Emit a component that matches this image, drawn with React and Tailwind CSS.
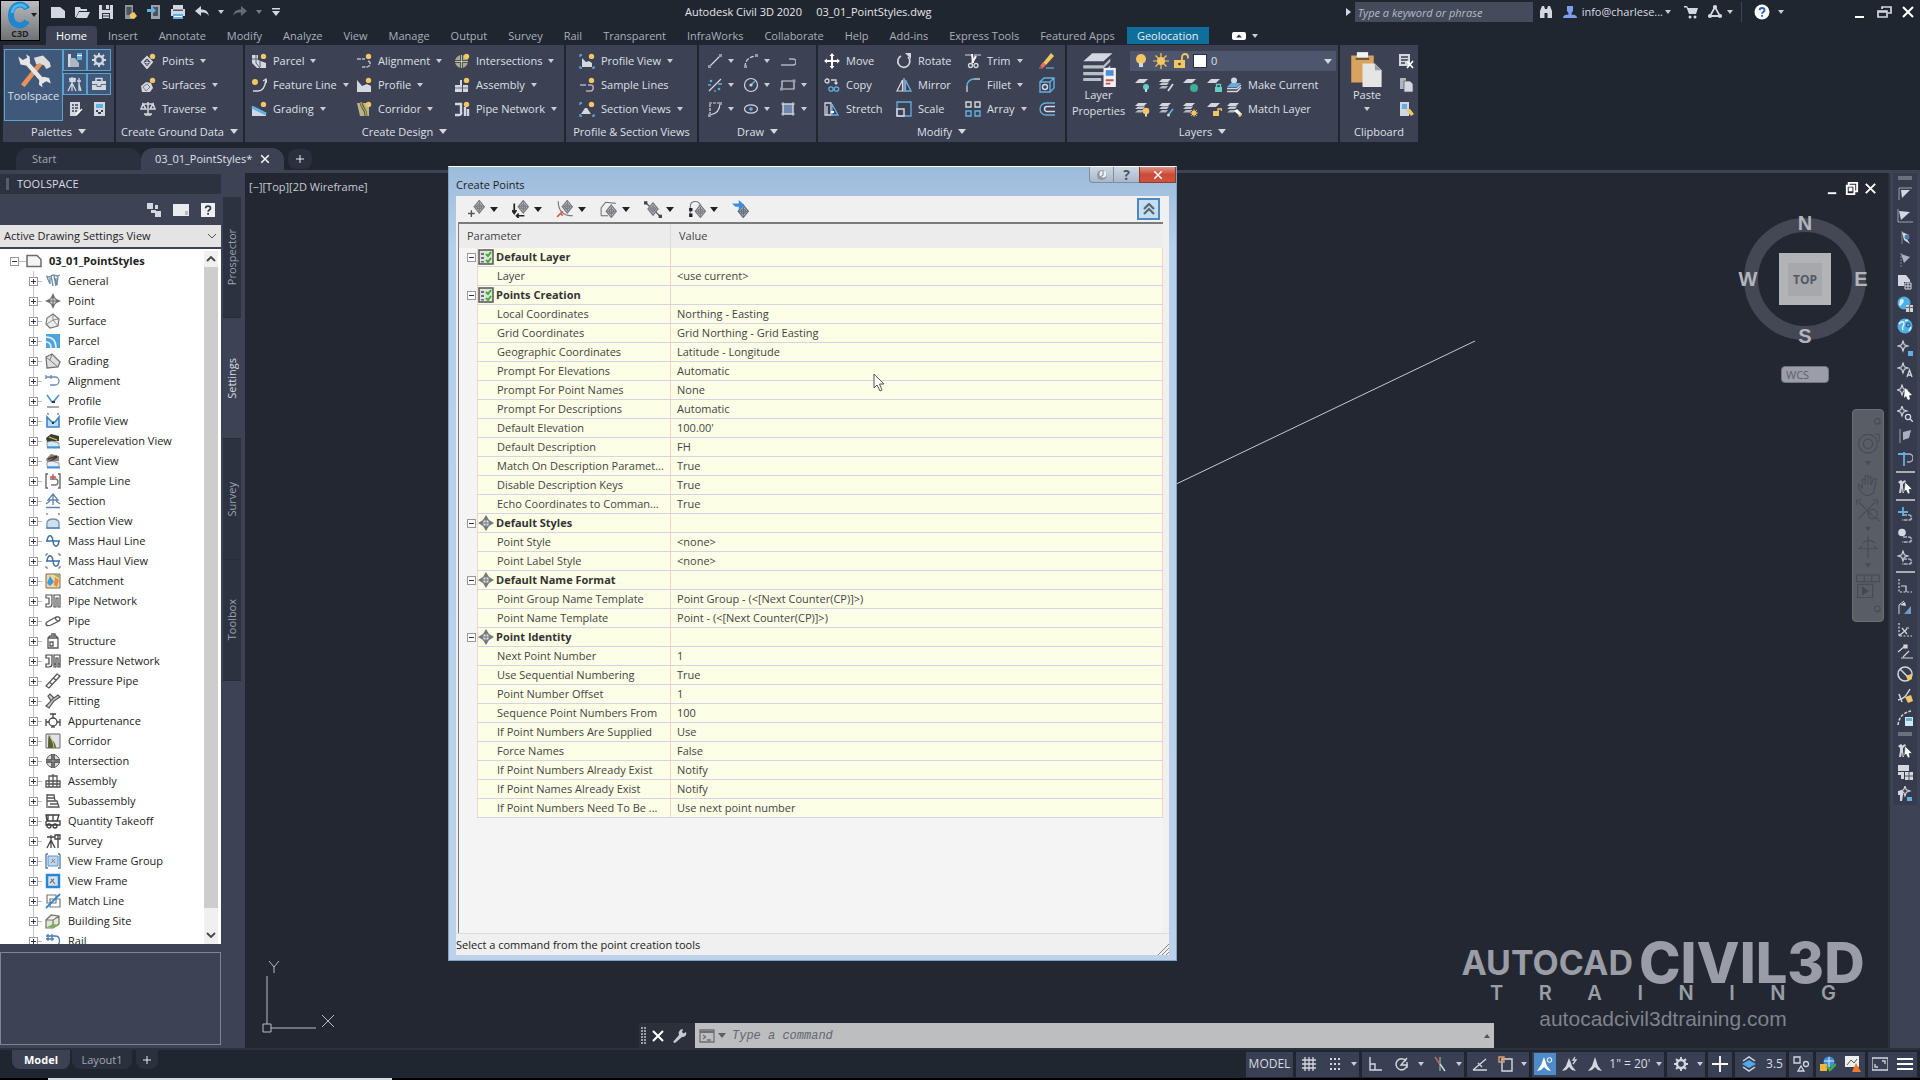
import React from "react";

const L = "#d3d7df";
const Y = "#f4c564";
const B = "#62b0e2";
const T = "#5fd0c0";
const D = "#3a3f4a";

const Sun = () => <circle cx="12.5" cy="3.4" r="2.7" fill={Y} />;
const Sheets = () => (
  <g fill={L}>
    <path d="M4 2h9l-3 3H1z" />
    <path d="M4 5.5h7L9 8H1z" opacity=".9" />
    <path d="M4 9h6l-2 2.5H1z" opacity=".8" />
  </g>
);
const Sheet = () => <path d="M5 2h9l-4 4H1z" fill={L} />;
const Target = ({ x = 8, y = 8, c = "#77797e", r = 4 }) => (
  <g fill="none" stroke={c} strokeWidth="1.1">
    <path d={`M${x} ${y - r - 1.5}l${r + 0.5} ${r + 1.5}-${r + 0.5} ${r + 1.5}-${r + 0.5}-${r + 1.5}z`} fill="#d2d4d7" />
    <circle cx={x} cy={y} r={r * 0.5} />
    <path d={`M${x} ${y - r}v${2 * r}M${x - r} ${y}h${2 * r}`} />
  </g>
);
const Star = ({ x = 6, y = 6 }) => (
  <path
    d={`M${x} ${y - 5}l1.3 3.7 3.7 1.3-3.7 1.3-1.3 3.7-1.3-3.7-3.7-1.3 3.7-1.3z`}
    fill="none"
    stroke={L}
    strokeWidth="1.1"
  />
);
const Curve = () => <path d="M6 9h6a2 2 0 0 1 0 5H5" fill="none" stroke="#a9b3c4" strokeWidth="1.6" strokeDasharray="4 1" />;
const Person = () => (
  <g fill={L}>
    <path d="M1 4l3-2 1.500 1.500L8 2l1 2-3 2v3l1 6H5.500L5 10l-1 5H2l1-6V6z" />
  </g>
);

const ICONS = {
  newFile: <path d="M1 3h9l5 4v7H1z" fill={L} />,
  open: (
    <g fill={L}>
      <path d="M1 3h5l1 2h6v2H5l-3 6H1z" />
      <path d="M5 8h11l-3 6H2z" />
    </g>
  ),
  save: (
    <g fill={L}>
      <path d="M1 1h14v14H1z" />
      <path d="M4 1h8v5H4zM4 9h8v6H4z" fill="#2b313d" />
      <path d="M8 1h3v4H8zM5 10h6v1.5H5zM5 12.500h6V14H5z" />
    </g>
  ),
  saveAs: (
    <g>
      <path d="M3 1h8v14H3z" fill="#8e949e" />
      <path d="M4.500 3h5v8h-5z" fill="#4d535f" />
      <path d="M8 10l4-2 3 4-3 3-4-1z" fill={Y} />
    </g>
  ),
  mobile: (
    <g>
      <path d="M5 1h9v14H5z" fill="#9aa1ac" />
      <path d="M7 3h5v9H7z" fill="#4d535f" />
      <path d="M1 5h5V2.500L10 6.500 6 10V8H1z" fill={B} />
    </g>
  ),
  print: (
    <g>
      <path d="M3 1h10v4H3zM1 5h14v7H1z" fill={L} />
      <path d="M3 5.500h10V7H3z" fill="#555b67" />
      <path d="M3 10h10v5H3z" fill={B} />
      <path d="M4 12h8v1H4z" fill="#fff" />
    </g>
  ),
  undo: <path d="M1 7l6-5v3.500c5 0 7 2 8 6.500-2-3-4-3.500-8-3.500V12z" fill={L} />,
  redo: <path d="M15 7L9 2v3.500C4 5.500 2 7.500 1 12c2-3 4-3.500 8-3.500V12z" fill="#646b79" />,
  custom: <path d="M4 4h8v1.500H4zM4 7h8l-4 5z" fill={L} />,
  binoculars: <path d="M2 14V7l2-5h2l1 3h2l1-3h2l2 5v7H9.500V9h-3v5z" fill={L} />,
  user: (
    <g fill="#7f9cf0">
      <path d="M5 2h6v5l-1.500 2v2H6.500V9L5 7z" />
      <path d="M1 14c0-3 3-3.500 7-3.500s7 .5 7 3.500z" />
    </g>
  ),
  cart: (
    <g fill={L}>
      <path d="M1 2h3l1 2h10l-2 6H6L3.500 3.500H1z" />
      <circle cx="7" cy="13" r="1.500" />
      <circle cx="12" cy="13" r="1.500" />
    </g>
  ),
  a360: (
    <g stroke={L} strokeWidth="1.800" fill={L}>
      <path d="M8 3L3 12h10z" fill="none" />
      <circle cx="8" cy="3" r="1.200" />
      <circle cx="3" cy="12" r="1.200" />
      <circle cx="13" cy="12" r="1.200" />
    </g>
  ),
  help: (
    <g>
      <circle cx="8" cy="8" r="7.500" fill="#fff" />
      <path d="M5.700 6.300c0-3 4.800-3 4.800 0 0 1.700-2.400 1.700-2.400 3.400M8.100 11v1.800" fill="none" stroke="#2e5fb8" strokeWidth="1.900" />
    </g>
  ),
  min: <path d="M3 12h9v2H3z" fill="#fff" />,
  restore: (
    <path d="M6 5V3h9v6h-3M2 7h9v6H2zM2 8h9" fill="none" stroke={L} strokeWidth="1.700" />
  ),
  close: <path d="M3 3l10 10M13 3L3 13" stroke="#fff" strokeWidth="2" />,
  ribbonToggle: (
    <g>
      <rect x="1" y="4" width="14" height="8" rx="2" fill="#fff" />
      <path d="M5 9.500l3-3 3 3z" fill="#333" />
    </g>
  ),
  toolspace: (
    <g>
      <path d="M11 5l-8 10" stroke="#e8935c" strokeWidth="2" />
      <path d="M8 2.500l4-1 3 3 .5 2-2 1-1-1.500-2-1-1.500.5z" fill="#dcdcdc" />
      <path d="M4.500 4.500l8 9" stroke="#e6e6e6" strokeWidth="2" />
      <path d="M1 2l2 1.500L5 2.500 4.500 1 6 2l.3 2.500L4.500 6 2 5.500z" fill="#e6e6e6" />
      <path d="M15.500 14l-2-1-2 1 .3 1.700-1.600-1.200.2-2.500 2-1 2.300.5z" fill="#e6e6e6" />
    </g>
  ),
  prospector: (
    <g>
      <path d="M1 2h3v8h6v5H1z" fill={L} />
      <path d="M3 6h5l4 5v4H3z" fill="#aeb6c2" />
      <path d="M10 1h5v7h-5z" fill={B} />
      <path d="M10 3h5v1h-5z" fill="#fff" />
    </g>
  ),
  gear: (
    <g>
      <circle cx="8" cy="8" r="4" fill="none" stroke={L} strokeWidth="2.400" />
      <path d="M8 1v3M8 12v3M1 8h3M12 8h3M3 3l2 2M11 11l2 2M13 3l-2 2M3 13l2-2" stroke={L} strokeWidth="1.900" />
    </g>
  ),
  survey: (
    <g fill="none" stroke={L} strokeWidth="1.300">
      <path d="M2 3h7M5 1v6M5 7L1 15M5 7v8M5 7l4 8M12 2v13M10 5h4M12 8l2 7" />
      <rect x="3" y="2.500" width="5" height="3" fill={L} />
    </g>
  ),
  toolbox: (
    <g>
      <path d="M5 5V2.500h6V5" fill="none" stroke={L} strokeWidth="1.500" />
      <path d="M1 5h14v9H1z" fill={L} />
      <path d="M1 8.500h5v2h4v-2h5" fill="none" stroke="#55708a" />
    </g>
  ),
  sheet: (
    <g>
      <path d="M3 1h10v10l-4 4H3z" fill={L} />
      <path d="M5 4h2M5 7h2M5 10h2M8 4h3M8 7h3M8 10h2" stroke={D} strokeWidth="1.300" />
      <path d="M9 14l6-6" stroke="#fff" strokeWidth="1.500" />
    </g>
  ),
  calc: (
    <g>
      <path d="M3 1h11v14H3z" fill={L} />
      <path d="M5 3h7v4H5z" fill={B} />
      <path d="M5 9h2v2H5zM10 9h2v2h-2zM7 11h3v2H7z" fill={D} />
    </g>
  ),
  points: (
    <g>
      <path d="M7 4l5 5-5 6-5-6z" fill="none" stroke={L} strokeWidth="2" />
      <path d="M7 7v5M4.500 9.500h5" stroke={L} />
      <Sun />
    </g>
  ),
  surfaces: (
    <g>
      <path d="M1 9l5-4 5 1 2 5-3 4H2z" fill={L} />
      <path d="M3 10l4-3 3 3-4 4z" fill="none" stroke="#777e8c" />
      <Sun />
    </g>
  ),
  traverse: (
    <g stroke={L} strokeWidth="1.500" fill="none">
      <path d="M2 3h12M8 1v12M5 14h6M3 3L1 8h5zM13 3l-3 5h5z" />
      <path d="M4 13h8" />
    </g>
  ),
  parcel: (
    <g>
      <path d="M1 2h6v5l8 3v5H6L1 10z" fill={L} />
      <path d="M1 6h6M5 2v8l4 5M9 8v6" stroke="#59606f" fill="none" />
      <Sun />
    </g>
  ),
  featureLine: (
    <g>
      <path d="M2 14h5c4 0 7-4 8-11" fill="none" stroke={L} strokeWidth="1.600" />
      <path d="M12 4l3-2 1 4" fill="none" stroke={L} strokeWidth="1.300" />
      <circle cx="4" cy="5" r="3" fill={Y} />
    </g>
  ),
  grading: (
    <g>
      <path d="M1 5l14 7v3H1z" fill={L} />
      <path d="M1 6l14 7" stroke={B} strokeWidth="3" />
      <Sun />
    </g>
  ),
  alignment: (
    <g>
      <path d="M1 6h8M12 8c3 1 3 5-1 6H6" fill="none" stroke="#b4bccb" strokeWidth="1.500" strokeDasharray="4 1" />
      <Sun />
    </g>
  ),
  profile: (
    <g>
      <path d="M1 3l5 6 5-2 4 2v6H1z" fill={L} />
      <Sun />
    </g>
  ),
  corridor: (
    <g>
      <path d="M1 2h12v13H4z" fill="#b9b48e" />
      <path d="M5 1c0 6 5 6 5 14" stroke="#5b5f3e" strokeWidth="3" fill="none" />
      <path d="M5 1c0 6 5 6 5 14" stroke={Y} strokeWidth=".800" fill="none" />
      <Sun />
    </g>
  ),
  intersections: (
    <g>
      <circle cx="7.500" cy="8.500" r="6.500" fill="#a9a98c" />
      <path d="M7.500 2v13M1 8.500h13" stroke="#4f5548" strokeWidth="3" />
      <path d="M7.500 2v13M1 8.500h13" stroke={L} strokeWidth=".800" />
      <Sun />
    </g>
  ),
  assembly: (
    <g>
      <path d="M1 8h5V3h2v12H1zM9 8h5v7H9z" fill={L} />
      <path d="M1 11h14" stroke="#6b7282" />
      <Sun />
    </g>
  ),
  pipes: (
    <g>
      <path d="M1 3h6v8a2 2 0 0 1-2 3H1M11 6v9M14 8v7" fill="none" stroke={L} strokeWidth="2.400" />
      <Sun />
    </g>
  ),
  profileView: (
    <g>
      <path d="M3 5l4 4 3-1 3 2v4H3z" fill={L} />
      <path d="M1 4V2h2M1 13v2h2M15 13v2h-2" fill="none" stroke={B} strokeWidth="1.300" />
      <Sun />
    </g>
  ),
  sampleLines: (
    <g>
      <path d="M1 8h6M9 8h3c3 0 3 5 0 6H7" fill="none" stroke="#b9a9bd" strokeWidth="1.500" />
      <Sun />
    </g>
  ),
  sectionViews: (
    <g>
      <path d="M2 13l4-6h2l4 6z" fill={L} />
      <path d="M1 4V2h2M1 13v2h2M15 13v2h-2" fill="none" stroke={B} strokeWidth="1.300" />
      <Sun />
    </g>
  ),
  line: (
    <g>
      <path d="M2 14L14 2" stroke={L} strokeWidth="1.200" />
      <path d="M1 12h3v3H1zM12 1h3v3h-3z" fill="#8f9bb0" />
    </g>
  ),
  arc: (
    <g>
      <path d="M2 14C2 7 7 3 14 3" fill="none" stroke={L} strokeDasharray="4 1.500" strokeWidth="1.200" />
      <path d="M1 12h3v3H1zM12 1h3v3h-3z" fill="#8f9bb0" />
    </g>
  ),
  pline: <path d="M1 12h12a3 3 0 0 0 0-6H9" fill="none" stroke="#a9b3c4" strokeWidth="1.400" />,
  divide: (
    <g>
      <path d="M2 14L14 2" stroke={L} strokeWidth="1.200" />
      <circle cx="4" cy="4" r="1.300" fill={B} />
      <circle cx="12" cy="12" r="1.300" fill={B} />
      <path d="M1 8h3M11 7h4M8 13v2" stroke={B} strokeWidth="1.300" />
    </g>
  ),
  circle: (
    <g fill="none" stroke={L} strokeWidth="1.200">
      <circle cx="8" cy="8" r="6.500" />
      <path d="M8 8l4-4" stroke={B} strokeWidth="1.500" />
      <circle cx="8" cy="8" r="1" fill={B} />
    </g>
  ),
  rect: (
    <g>
      <path d="M2 4h12v8H2z" fill="none" stroke={L} strokeWidth="1.200" />
      <path d="M0 10.500h3v3H0zM12.500 2.500h3v3h-3z" fill="#8f9bb0" />
    </g>
  ),
  pcurve: (
    <g fill="none" stroke={L} strokeWidth="1.200">
      <path d="M2 2h11M3 3v11" strokeDasharray="3 1" />
      <path d="M13 2c0 7-4 11-10 12" />
      <path d="M1 13h3v3H1zM12 1h3v3h-3z" fill="#8f9bb0" stroke="none" />
    </g>
  ),
  ellipse: (
    <g fill="none" stroke={L} strokeWidth="1.200">
      <ellipse cx="8" cy="8" rx="6.500" ry="4.200" />
      <circle cx="8" cy="8" r="1.200" fill={B} stroke={B} />
    </g>
  ),
  hatch: (
    <g>
      <path d="M3 3h10v10H3z" fill="#6d86ad" stroke={L} />
      <path d="M1 3h14M1 13h14M3 1v14M13 1v14" stroke={L} strokeWidth=".900" />
    </g>
  ),
  move: (
    <path d="M8 0l2.500 3H9v4h4V5.500L16 8l-3 2.500V9H9v4h1.500L8 16l-2.500-3H7V9H3v1.500L0 8l3-2.500V7h4V3H5.500z" fill="#fff" />
  ),
  copy: (
    <g fill="none" strokeWidth="1.300">
      <circle cx="3" cy="4" r="2" stroke={L} />
      <path d="M7 3h5v4M10.500 5.500L12 7l1.500-1.500" stroke={L} />
      <circle cx="7" cy="12" r="2.200" stroke={B} />
      <circle cx="12.500" cy="12" r="2.200" stroke={B} />
    </g>
  ),
  stretch: (
    <g fill="none" strokeWidth="1.300">
      <path d="M1 2h6v12H1zM3 5v9" stroke={L} />
      <path d="M8 3l6 11H8z" stroke={B} />
      <path d="M7 11h3" stroke="#fff" strokeWidth="2" />
    </g>
  ),
  rotate: (
    <g>
      <path d="M5 3a6 6 0 1 0 7 1" fill="none" stroke={L} strokeWidth="1.700" />
      <path d="M9 0h6v6z" fill={L} />
    </g>
  ),
  mirror: (
    <g>
      <path d="M6.500 3v11H1z" fill="none" stroke={L} strokeWidth="1.200" />
      <path d="M9.500 3v11H15z" fill="none" stroke={B} strokeWidth="1.400" />
      <path d="M8 1v14" stroke={L} />
    </g>
  ),
  scale: (
    <g fill="none">
      <path d="M1 1h14v14H1z" stroke={B} strokeWidth="1.300" />
      <path d="M1 8h7v7H1z" stroke={L} strokeWidth="1.500" />
    </g>
  ),
  trim: (
    <g>
      <path d="M0 2h6M9 2h7" stroke={L} strokeWidth="1.200" />
      <path d="M7 1l1 9M11 3L7 10" stroke="#fff" strokeWidth="2" />
      <circle cx="5.500" cy="12.500" r="2" fill="none" stroke={L} strokeWidth="1.300" />
      <circle cx="11" cy="12.500" r="2" fill="none" stroke={L} strokeWidth="1.300" />
    </g>
  ),
  fillet: (
    <g fill="none">
      <path d="M2 15V9" stroke={L} strokeWidth="1.300" />
      <path d="M2 9c0-4 3-7 7-7" stroke={B} strokeWidth="1.500" />
      <path d="M9 2h6" stroke={L} strokeWidth="1.300" />
    </g>
  ),
  array: (
    <g fill="none" strokeWidth="1.400">
      <path d="M1 1h5v5H1zM10 1h5v5h-5z" stroke={L} />
      <path d="M1 10h5v5H1zM10 10h5v5h-5z" stroke={B} />
    </g>
  ),
  erase: (
    <g>
      <path d="M4 10L12 0l3 3-8 9z" fill={Y} />
      <path d="M1 13l3-4 3 3-3 3z" fill="#e46f5b" />
      <path d="M7 15h8" stroke={B} strokeWidth="1.200" />
      <path d="M0 15h4" stroke="#e46f5b" />
    </g>
  ),
  box: (
    <g fill="none" stroke={B} strokeWidth="1.400">
      <path d="M1 5h10v10H1zM1 5l4-4h10v10l-4 4M11 5l4-4" />
      <circle cx="6" cy="10" r="2.500" stroke={L} />
    </g>
  ),
  offset: (
    <g fill="none">
      <path d="M16 2H7a6 6 0 0 0 0 12h9" stroke={B} strokeWidth="1.300" />
      <path d="M16 5.500H8a2.500 2.500 0 0 0 0 5h8" stroke={L} strokeWidth="1.500" />
    </g>
  ),
  layerProps: (
    <g>
      <path d="M5 1h9l-4 3.500H1z" fill={L} />
      <path d="M1 6.300h9l3-3v1.500l-3 3H1zM1 9.300h9l3-3v1.500l-3 3H1zM1 12h8v1.300H1z" fill="#b9bfc9" />
      <path d="M10 7.500h5.500v8.500H10z" fill="#f1f1f1" />
      <path d="M11 8.500h3.500V11H11z" fill="#4c8fd8" />
      <path d="M11 13h3.500M11 14.500h2" stroke="#c0504d" strokeWidth=".800" />
    </g>
  ),
  bulb: (
    <g>
      <circle cx="8" cy="6" r="5" fill={Y} />
      <path d="M6 10h4v4H6z" fill={L} />
    </g>
  ),
  sun: (
    <g>
      <circle cx="8" cy="8" r="4" fill={Y} />
      <path d="M8 0v16M0 8h16M2.500 2.500l11 11M13.500 2.500l-11 11" stroke={Y} strokeWidth="1.200" />
    </g>
  ),
  unlock: (
    <g>
      <path d="M1 7h11v8H1z" fill={Y} />
      <path d="M9 7V4a3 3 0 0 1 6 0v1.500" fill="none" stroke={Y} strokeWidth="1.800" />
      <circle cx="6.500" cy="11" r="1.300" fill={D} />
    </g>
  ),
  layOff: (
    <g><Sheet /><circle cx="12" cy="10" r="3" fill={T} /><path d="M11 12h2v3h-2z" fill={L} /></g>
  ),
  layIso: (
    <g><Sheets /><path d="M15 7l-5 7" stroke={L} strokeWidth="1.800" /></g>
  ),
  layFreeze: (
    <g><Sheet /><circle cx="12" cy="11" r="4" fill="#3fae94" /></g>
  ),
  layLock: (
    <g><Sheet /><path d="M9 10h7v5H9z" fill={T} /><path d="M10.500 10V7.500h4V10" fill="none" stroke={T} strokeWidth="1.300" /></g>
  ),
  layMake: (
    <g>
      <circle cx="8" cy="3.500" r="3" fill={L} />
      <path d="M1 10l4-4h10l-4 4z" fill={B} />
      <path d="M1 11.500h10l4-3.500M1 14.500h10l4-4" fill="none" stroke={L} strokeWidth="1.500" />
    </g>
  ),
  layOn: (
    <g><Sheets /><circle cx="12" cy="10" r="3.300" fill={Y} /><path d="M11 13h2v2.500h-2z" fill={L} /></g>
  ),
  layUniso: (
    <g><Sheets /><path d="M15 8l-4 5" stroke={B} strokeWidth="1.800" /><circle cx="10.500" cy="14" r="1.500" fill={L} /></g>
  ),
  layThaw: (
    <g><Sheets /><circle cx="12" cy="12" r="2.500" fill={Y} /><path d="M12 8v8M8 12h8M9 9l6 6M15 9l-6 6" stroke={Y} strokeWidth=".800" /></g>
  ),
  layUnlock: (
    <g><Sheet /><path d="M7 10h6v5H7z" fill={Y} /><path d="M12 10V8h3.500v2" fill="none" stroke={Y} strokeWidth="1.300" /></g>
  ),
  layMatch: (
    <g><Sheets /><path d="M8 10l3-2 5 5-2 2z" fill="#fff" /><path d="M12 15l3-3 1 2-2 2z" fill={Y} /></g>
  ),
  paste: (
    <g>
      <path d="M1 2h10v12H1z" fill="#d9a35f" />
      <path d="M3.500 .500h5v2.500h-5z" fill="#f1f1f1" />
      <path d="M3 3h6v1H3z" fill="#6d5a3d" />
      <path d="M6 5.500h5.500l3 3V16H6z" fill="#e5e5e5" />
      <path d="M11.500 5.500v3h3z" fill="#9da0a6" />
    </g>
  ),
  cut: (
    <g>
      <path d="M1 1h11v12H1z" fill={L} />
      <path d="M3 4h7M3 7h7M3 10h4" stroke={D} strokeWidth="1.300" />
      <path d="M9 8l6 7M15 8l-6 7" stroke="#fff" strokeWidth="1.700" />
    </g>
  ),
  copyclip: (
    <g>
      <path d="M2 1h6v11H2z" fill="#aeb4c0" />
      <path d="M6 4h6l3 3v8H6z" fill={L} stroke="#4a5060" strokeWidth=".700" />
    </g>
  ),
  copylink: (
    <g>
      <path d="M2 1h9v14H2z" fill={L} />
      <path d="M4 3h5v5H4z" fill={B} />
      <path d="M8 9l4-1 4 5-3 2z" fill={Y} />
    </g>
  ),
  tsTree: <path d="M1 1h6v6H1zM5 8h5v3H5zM9 9h6v6H9zM9 3h3v4H9z" fill={L} />,
  tsPanel: (
    <g><path d="M0 2h16v12H0z" fill="#e9ebee" /><path d="M12 9h3v4h-3z" fill="#b4b9c2" /></g>
  ),
  tsHelp: (
    <g>
      <path d="M1 1h14v14H1z" fill="#eef0f3" />
      <path d="M5.700 6.300c0-3 4.800-3 4.800 0 0 1.700-2.400 1.700-2.400 3.400M8.100 11v1.800" fill="none" stroke="#333a48" strokeWidth="1.800" />
    </g>
  ),
  drawing: <path d="M1 2.500h10l4 4v7H1z" fill="#f4f4f4" stroke="#6b6b6b" strokeWidth="1.500" />,

  General: (
    <g fill="none" stroke="#6f8ba8" strokeWidth="1.300">
      <path d="M1 3l3 1 4-2 4 1 3-1M2 4l3 7M6 3l2 10M9 3l2 10M13 3l-1 9M5 11V5M11 13V5" />
    </g>
  ),
  Point: (
    <g>
      <path d="M8 0l2.500 5.500L16 8l-5.500 2.500L8 16l-2.500-5.500L0 8l5.500-2.500z" fill="#6d6d6d" />
      <circle cx="8" cy="8" r="3.500" fill="#cfcfcf" stroke="#6d6d6d" />
      <path d="M8 4.500v7M4.500 8h7" stroke="#6d6d6d" />
    </g>
  ),
  Surface: (
    <g fill="#ededed" stroke="#777" strokeWidth="1.200">
      <path d="M8 1l6 5-1 7-8 2-4-4 1-6z" />
      <path d="M8 1v6l5 6M8 7l-6 4M8 7l6-1" fill="none" strokeWidth=".800" />
    </g>
  ),
  Parcel: (
    <g>
      <path d="M1 1h14v14H1z" fill="#4da3dc" />
      <path d="M1 4c7 0 10 4 10 11M1 9c4 0 5 3 5 6" fill="none" stroke="#e6f3fc" strokeWidth="1.600" />
    </g>
  ),
  Grading: (
    <g fill="#dedede" stroke="#757575" strokeWidth="1.300">
      <path d="M1 4l6-3 8 8-2 5-11 1z" /><path d="M1 4l12 10M7 1l-2 6" fill="none" strokeWidth=".900" />
    </g>
  ),
  Alignment: <path d="M1 4h9a4 4 0 0 1 0 8H5M1 2v4M6 2v4" fill="none" stroke="#6b8bb0" strokeWidth="1.300" />,
  Profile: (
    <g fill="none"><path d="M2 2l5 7 2-1 5-6" stroke="#4c93d0" strokeWidth="1.600" /><path d="M7 8h3v2H7z" fill="#234" /><path d="M2 14h12" stroke="#777" strokeWidth="1.300" /></g>
  ),
  "Profile View": (
    <g fill="none"><path d="M2 4v10h12V4l-4 5H7z" fill="#bcdcf5" stroke="#3d84c8" strokeWidth="1.600" /><path d="M7 9h2v2H7z" fill="#234" /><path d="M2 1h2M12 1h2" stroke="#555" /></g>
  ),
  "Superelevation View": (
    <g><path d="M1 5l5-4 8 2v5L2 9z" fill="#3c3c33" /><path d="M4 4l8 3" stroke="#d6c84f" strokeWidth="1.300" /><path d="M2 9l5-1 7 2v4H2z" fill="#d5e8f6" stroke="#777" strokeWidth=".700" /><path d="M2 14.500h13" stroke="#3d94dc" strokeWidth="2" /></g>
  ),
  "Cant View": (
    <g><path d="M1 6l5-5 8 2v5L2 9z" fill="#8b7a76" /><path d="M3 6l9-3M4 9l8-5" stroke="#2d2d2d" strokeWidth="1.200" /><path d="M2 9l5-1 7 2v4H2z" fill="#e5eff6" stroke="#777" strokeWidth=".700" /><path d="M2 14.500h13" stroke="#3d94dc" strokeWidth="2" /></g>
  ),
  "Sample Line": (
    <g fill="none" strokeWidth="1.400"><path d="M3 1H1v14h2M13 1h2v14h-2" stroke="#666" /><path d="M8 1v6M5 4h6" stroke="#d34b4b" /><path d="M5 6h5a3 3 0 0 1 0 6H6" stroke="#777" /></g>
  ),
  Section: <path d="M8 1v11M8 1L3 7h10zM1 11l4-3M15 11l-4-3M1 14.500h14" fill="none" stroke="#5d83aa" strokeWidth="1.300" />,
  "Section View": (
    <g><path d="M2 15V9c2-4 10-4 12 0v6z" fill="#cfe0ee" stroke="#7790a8" strokeWidth="1.300" /><path d="M1 1h2M13 1h2" stroke="#555" /><path d="M1 15h14" stroke="#3d84c8" /></g>
  ),
  "Mass Haul Line": <path d="M1 8h14M2 8c1-7 5-7 6 0s5 7 6 0" fill="none" stroke="#3b6fa6" strokeWidth="1.500" />,
  "Mass Haul View": (
    <g fill="none"><path d="M1 8h14M2 8c1-7 5-7 6 0s5 7 6 0" stroke="#3b6fa6" strokeWidth="1.500" /><path d="M1 3V1h2M13 1h2v2M1 13v2h2M13 15h2v-2" stroke="#666" /></g>
  ),
  Catchment: (
    <g><path d="M1 1h14v14H1z" fill="#f1d7a0" stroke="#7d6b52" /><path d="M5 3l4 6-4 4-3-3z" fill="#3f9be0" /><path d="M10 4l4 3-2 7-3-2z" fill="#e08a4b" /><path d="M9 2h5v3z" fill="#7fbf5f" /></g>
  ),
  "Pipe Network": (
    <g fill="none" stroke="#555" strokeWidth="1.200"><path d="M1 2h6v9a3 3 0 0 1-3 3H1v-3h3V5H1zM9 2h6v12h-2V5h-2v9H9z" /></g>
  ),
  Pipe: <path d="M2 9l9-5c4-1 5 2 3 4l-8 4c-5 2-6-1-4-3zM11 4c-1 2 0 4 3 4" fill="none" stroke="#555" strokeWidth="1.300" />,
  Structure: (
    <g fill="none" stroke="#555" strokeWidth="1.300"><path d="M3 5l2-2h6l2 2v10H3zM3 5h10M6 1h4v2M5 9h3v4H5z" /></g>
  ),
  "Pressure Network": (
    <g fill="none" stroke="#444" strokeWidth="1.200"><path d="M1 2h6v9a3 3 0 0 1-3 3H1v-3h3V5H1zM9 2h6v12h-2V5h-2v9H9zM9 11h2M13 11h2" /></g>
  ),
  "Pressure Pipe": <path d="M1 13L12 1l3 2L4 15zM4 9l3 2M8 5l3 2" fill="none" stroke="#555" strokeWidth="1.300" />,
  Fitting: <path d="M1 13l5-5-3-5 2-2 4 4 4-3 2 2-6 4-5 7zM9 4l-3 4" fill="#c9c9c9" stroke="#555" strokeWidth="1.200" />,
  Appurtenance: (
    <g fill="none" stroke="#444" strokeWidth="1.300"><path d="M5 1h6M8 1v4M1 6v7M15 6v7M1 9h3M12 9h3" /><circle cx="8" cy="9" r="4" /><path d="M6 14h4" /></g>
  ),
  Corridor: (
    <g><path d="M1 1h14v14H1z" fill="#dfe2ee" stroke="#666" /><path d="M4 1c1 6 7 7 7 14H3C3 9 3 5 4 1z" fill="#55613d" /><path d="M5 2c1 5 4 7 4 13" fill="none" stroke="#d9d14e" /></g>
  ),
  Intersection: (
    <g><circle cx="8" cy="8" r="6.500" fill="#ddd" stroke="#555" /><path d="M8 1v14M1 8h14" stroke="#454545" strokeWidth="3.500" /><path d="M8 1v14M1 8h14" stroke="#c9c9c9" strokeWidth=".700" /></g>
  ),
  Assembly: (
    <g fill="none" stroke="#555" strokeWidth="1.300"><path d="M8 1v13M4 3h8v5H4zM1 8h14v6H1zM4 8v6M12 8v6M1 11h14" /></g>
  ),
  Subassembly: <path d="M2 1v14M2 2h7l1 6H2M3 8h9l2 6H3M2 5h8M5 11h8" fill="none" stroke="#555" strokeWidth="1.300" />,
  "Quantity Takeoff": (
    <g fill="none" stroke="#3e3e3e" strokeWidth="1.300"><path d="M1 2h13l-2 6H2zM3 2v6M8 2v6M12 8h3v4H1V8" /><circle cx="4" cy="13" r="2" /><circle cx="10" cy="13" r="2" /></g>
  ),
  Survey: (
    <g fill="none" stroke="#444" strokeWidth="1.300"><path d="M2 4h8M6 2v5M6 7L2 15M6 7v8M6 7l4 8M13 1v14M10 2h5v4h-5z" /></g>
  ),
  "View Frame Group": (
    <g><path d="M3 3h10v10H3z" fill="#b9d7f0" stroke="#5d94c9" /><path d="M1 1h2M1 1v14h2M15 1h-2M15 1v14h-2" fill="none" stroke="#4b79a8" strokeWidth="1.300" /><path d="M6 10l4-4M7 6l3 4" stroke="#a9746c" /></g>
  ),
  "View Frame": (
    <g><path d="M2 2h12v12H2z" fill="#cfe2f2" stroke="#2a86d6" strokeWidth="2.500" /><path d="M5 10l4-4M6 6l4 5" stroke="#8d6a64" strokeWidth="1.200" /></g>
  ),
  "Match Line": (
    <g fill="none"><path d="M2 2h9v8H2zM5 6h10v8H5z" stroke="#777" strokeWidth="1.200" /><path d="M1 15L15 1" stroke="#2d86d3" strokeWidth="1.800" /></g>
  ),
  "Building Site": (
    <g fill="#e3e6da" stroke="#6f7569" strokeWidth="1.200"><path d="M1 7l5-5 8 1v8l-6 4H1zM1 7h7l6-4M8 7v8" /><path d="M2 14l6-3 6 1-5 3z" fill="#7fae5a" stroke="none" /></g>
  ),
  Rail: <path d="M1 3h9c6 0 6 9 0 10H5M1 6h8M3 1v7M7 1v7" fill="none" stroke="#4a7cae" strokeWidth="1.300" />,

  ptAdd: (<g><Target x={10} y={6} /><path d="M3 9v6M0 12h6" stroke="#555" strokeWidth="1.200" /></g>),
  ptDown: (<g><Target x={10} y={6} /><path d="M2 3v9M0 9l2 3 2-3M4 14h7M6 12l-2 2 2 2" stroke="#222" fill="none" strokeWidth="1.500" /></g>),
  ptArc: (<g><Target x={10} y={6} /><path d="M2 1c0 9 4 13 13 13" stroke="#777" fill="none" /><path d="M1 15l5-5M4 12l2 2" stroke="#d9534f" strokeWidth="1.400" /></g>),
  ptSurf: (<g><path d="M1 14V7l4-5 9 1" stroke="#777" fill="none" /><path d="M1 14h6" stroke="#777" /><Target x={10} y={10} /></g>),
  ptInterp: (<g><path d="M1 2l13 12" stroke="#555" /><path d="M0 1h3v3H0zM13 13h3v3h-3z" fill="#444" /><Target x={8} y={8} /></g>),
  ptSlope: (<g><path d="M2 13V6c0-6 8-6 9-1" stroke="#777" fill="none" /><path d="M1 7h3v3H1zM1 12h3v3H1z" fill="#222" /><Target x={11} y={10} /></g>),
  ptImport: (<g><Target x={10} y={10} c="#5f6b78" /><path d="M0 3h6V0l5 4.500L6 9V6H3z" fill="#3a8edb" /></g>),
  grpCheck: (
    <g>
      <path d="M1 1h14v14H1z" fill="#dfe3e0" stroke="#555" strokeWidth="1.500" />
      <path d="M3 4h3v2H3zM3 8h3v2H3zM3 12h3v1.500H3z" fill="#6b6f76" />
      <path d="M8 5l2 2 3-4M8 11l2 2 3-4" stroke="#3fae2b" strokeWidth="2" fill="none" />
    </g>
  ),
  grpPoint: (
    <g>
      <path d="M8 0l3 5 5 3-5 3-3 5-3-5-5-3 5-3z" fill="#74777c" />
      <circle cx="8" cy="8" r="3.500" fill="#e3e4dc" stroke="#74777c" />
      <path d="M8 4.500v7M4.500 8h7" stroke="#74777c" />
    </g>
  ),

  wrench: <path d="M2 14l6-7c-1-3 1-6 4-6l-1 3 1.500 1.500L15 4c1 3-1 5-4 5l-7 6z" fill="#c5cad3" />,
  prompt: (
    <g fill="none" stroke="#6b6f75" strokeWidth="1.300"><path d="M1 2h14v12H1z" /><path d="M1 4h14" strokeWidth="2" /><path d="M4 7l2.500 2L4 11M8 12h4" /></g>
  ),
  gridI: <path d="M4 1v14M8 1v14M12 1v14M1 4h14M1 8h14M1 12h14" stroke={L} strokeWidth="1.300" />,
  snapI: <path d="M3 3h10M3 8h10M3 13h10" stroke={L} strokeWidth="2" strokeDasharray="2 2" />,
  ortho: <path d="M3 1v13h12M3 8h5v6" fill="none" stroke={L} strokeWidth="1.400" />,
  polar: (<g fill="none" stroke={L} strokeWidth="1.400"><path d="M12 5a5.500 5.500 0 1 0 1 4H7l6-7" /><path d="M13 6v6" /></g>),
  iso: (<g strokeWidth="1.400"><path d="M8 1v14" stroke="#66b38b" /><path d="M3 1l6 9" stroke="#c66" /><path d="M8 8l5 7" stroke={L} /></g>),
  track: (<g fill="none" stroke={L} strokeWidth="1.300"><path d="M1 14h14M1 14L14 3" /><path d="M6 7l4 4" /></g>),
  osnap: (<g fill="none" strokeWidth="1.400"><path d="M4 3h10v12H4z" stroke={L} /><path d="M1 1h5v5H1z" stroke="#e39b68" /></g>),
  annoVis: (<g><path d="M7 1l2 6 1 3 4 5-4-1-3-3-3 3-4 1 4-6z" fill="#fff" /><circle cx="12.500" cy="4" r="2.300" fill="none" stroke="#fff" /></g>),
  annoAuto: (<g><path d="M7 2l2 5 1 3 4 5-4-1-3-3-3 3-4 1 4-5z" fill={L} /><path d="M13 1l-2 3h3l-3 4" fill="none" stroke={L} strokeWidth="1.300" /></g>),
  anno: <path d="M8 1l2 6 1 3 4 5-4-1-3-3-3 3-4 1 4-5 1-3z" fill={L} />,
  plus: <path d="M8 0v16M0 8h16" stroke="#fff" strokeWidth="1.800" />,
  layersS: (<g><path d="M8 4l7 4-7 4-7-4z" fill="#4fa9ea" /><path d="M2 5l6-4 6 4M2 11l6 4 6-4" fill="none" stroke={L} strokeWidth="1.500" /></g>),
  shapes: (<g fill="none" stroke={L} strokeWidth="1.300"><path d="M1 1h6v6H1zM8 10l3 5H5z" /><circle cx="13" cy="8" r="2.500" /></g>),
  globeCk: (<g><circle cx="9" cy="6" r="5.500" fill="#3f8ed8" /><path d="M0 8h7v7H0z" fill="#f0b53c" /><path d="M7 10l3 4 6-6" fill="none" stroke="#3fae4b" strokeWidth="2.400" /><path d="M4 5h10M9 1v10" stroke="#dcebf8" /></g>),
  imgWarn: (<g><path d="M0 0h14v11H0z" fill="#eee" /><path d="M2 9l4-5 3 3 3-4" stroke="#555" fill="none" /><path d="M11 7l5 9H7z" fill="#ee7b2e" /></g>),
  screen: (<g fill="none" stroke={L} strokeWidth="1.300"><path d="M0 2h16v12H0zM3 8v3h3M13 8V5h-3" /></g>),
  menu: <path d="M0 3h16M0 8h16M0 13h16" stroke="#fff" strokeWidth="2" />,

  rA: (<g><path d="M2 14V2h13" fill="none" stroke="#9aa2b0" /><path d="M4 4h9L5 12z" fill={L} /></g>),
  rB: (<g><path d="M1 1v13h15" fill="none" stroke="#9aa2b0" /><path d="M2 3l11 1-9 8z" fill={L} /></g>),
  rC: (<g><path d="M5 1v13" stroke="#7b8494" /><path d="M5 2l7 3-2 4 3 5-6-4z" fill={L} /><circle cx="10" cy="7" r="2.500" fill="#4f7ba8" /></g>),
  rD: (<g><path d="M4 1v14" stroke="#7b8494" strokeDasharray="2 1" /><path d="M4 2l9 3-6 6z" fill="#a9b1bf" /></g>),
  rE: (<g><path d="M1 1h8l4 5v6H1z" fill={L} /><path d="M7 8h8v8H7z" fill="#3d4357" /><path d="M8 9h6v6H8zM11 9v6M8 12h6" fill="none" stroke={L} /></g>),
  globeTab: (<g><circle cx="7" cy="7" r="6.500" fill="#4fb0e6" /><path d="M3 4c3-3 5 1 3 3S4 11 2 9z" fill="#d8f0fb" /><path d="M9 9h7v7H9z" fill="#d0d4da" /><path d="M9 11.500h7M12.500 9v7" stroke="#666" /></g>),
  globe: (<g><circle cx="8" cy="8" r="7.500" fill="#4fb0e6" /><path d="M2 6c3-4 5-2 5 0s-3 3-1 6M8 3l3-1M12 13l2-4" stroke="#dff3fc" strokeWidth="1.500" fill="none" /><circle cx="11" cy="7" r="2" fill="none" stroke="#2d4f6b" /></g>),
  stBlue: (<g><Star /><path d="M11 11h5v5h-5z" fill={B} /></g>),
  stA: (<g><Star /><path d="M10 15l2.500-7 2.500 7M11 13h3" fill="none" stroke={L} strokeWidth="1.300" /></g>),
  stCur: (<g><Star x={5} /><path d="M8 4l7 7-3 .500 1 3.500-2 1-2-4-2 2z" fill="#fff" /></g>),
  stZoom: (<g><Star x={5} y={5} /><circle cx="11" cy="11" r="2.600" fill="none" stroke={L} strokeWidth="1.300" /><path d="M13 13l3 3" stroke={L} strokeWidth="1.300" /></g>),
  flag: (<g><path d="M3 1v14" stroke="#9aa2b0" /><path d="M6 4l8-2-2 8-6 2z" fill="#a9b1bf" /></g>),
  bluT: (<g fill="none"><path d="M7 2v14M1 4h8" stroke={B} strokeWidth="1.800" /><path d="M9 4h3a4 4 0 0 1 0 8h-2" stroke="#a9b3c4" strokeWidth="1.500" /></g>),
  persCur: (<g><Person /><path d="M8 4l7 7-3 .500 1 3.500-2 1-2-4-2 2z" fill="#fff" stroke="#363c4e" strokeWidth=".600" /></g>),
  crvBlue: (<g><path d="M6 1v9M1 6h10" stroke={B} strokeWidth="1.800" /><Curve /></g>),
  crvBall: (<g><circle cx="5" cy="4.500" r="3.800" fill={L} /><Curve /></g>),
  crvStar: (<g><Star /><Curve /></g>),
  ang1: (<g fill="none" stroke={L} strokeWidth="1.200"><path d="M2 1v13h13" strokeDasharray="2 1.500" /><path d="M4 8h5v6" /></g>),
  ang2: (<g><path d="M2 14V5l5-4" fill="none" stroke={L} /><path d="M7 14l7-8v8z" fill="#6b9cc4" /><path d="M3 5l5-3 1 4z" fill={L} /></g>),
  ang3: (<g fill="none" stroke={L} strokeWidth="1.200"><path d="M2 1v13h13" strokeDasharray="2 1.500" /><path d="M2 14l8-7M5 6l5 6M9 6h3" /></g>),
  ang4: (<g fill="none" stroke={L} strokeWidth="1.200"><path d="M1 8l7-6M4 14h12M6 13l6-6" /><path d="M7 1h3v3H7z" fill={L} /></g>),
  noCirc: (<g fill="none" stroke={L} strokeWidth="1.500"><circle cx="8" cy="8" r="7" /><path d="M3 3l10 10" /><path d="M9 10l5-2 1 5-4 2z" fill={Y} stroke="none" /></g>),
  lineNote: (<g><path d="M1 12c6-1 8-4 12-11M2 6l3 8" stroke={L} fill="none" strokeWidth="1.500" /><path d="M8 9l6-2 2 6-5 2z" fill={Y} /></g>),
  arcCalc: (<g><path d="M1 15C2 7 6 3 14 1" stroke={L} fill="none" strokeWidth="1.500" strokeDasharray="3 1.500" /><path d="M8 7h8v9H8z" fill="#cfe9f7" /><path d="M9 8h6v3H9z" fill={B} /></g>),
  persTab: (<g><path d="M1 1h11v6H1z" fill={L} /><path d="M1 8h6v7H4V11H1zM8 8h8v8H8z" fill={L} /><path d="M8 12h8M12 8v8" stroke="#555" /></g>),
  persBlue: (<g><Star x={8} y={5} /><path d="M1 5h5v4l-1 6H3V9H1z" fill={L} /><path d="M10 11h5v4h-5z" fill={B} /></g>),
};

const Icon = ({ name, className = "size-4" }) => (
  <svg viewBox="0 0 16 16" className={`${className} shrink-0`} aria-hidden="true">
    {ICONS[name]}
  </svg>
);

const Caret = ({ className = "border-[#c9cdd6]" }) => (
  <span className={`block size-0 shrink-0 border-x-[3px] border-b-0 border-t-[4px] border-x-transparent! ${className}`} />
);
const BigCaret = ({ className = "border-[#d5d8df]" }) => (
  <span className={`block size-0 shrink-0 border-x-4 border-b-0 border-t-[5px] border-x-transparent! ${className}`} />
);

const TABS = [
  "Insert", "Annotate", "Modify", "Analyze", "View", "Manage", "Output", "Survey", "Rail", "Transparent",
  "InfraWorks", "Collaborate", "Help", "Add-ins", "Express Tools", "Featured Apps",
];

const Tool = ({ icon, label, caret }) => (
  <button className="flex h-6 items-center whitespace-nowrap">
    <Icon name={icon} />
    <span className="ml-[6px]">{label}</span>
    {caret && <span className="ml-[6px]"><Caret /></span>}
  </button>
);

const Column = ({ className, items }) => (
  <div className={`flex flex-col items-start ${className}`}>
    {items.map(([icon, label, caret]) => (
      <Tool key={label} icon={icon} label={label} caret={caret} />
    ))}
  </div>
);

const Panel = ({ className, title, caret, children }) => (
  <section className={`mr-[2px] flex shrink-0 flex-col bg-[#3c4154] ${className}`}>
    <div className="flex h-[76px] pt-1">{children}</div>
    <div className="flex h-[21px] items-center justify-center gap-[6px] whitespace-nowrap">
      <span>{title}</span>
      {caret && <BigCaret />}
    </div>
  </section>
);

const IconButton = ({ icon, label, className = "h-6 w-6" }) => (
  <button aria-label={label || icon} className={`flex shrink-0 items-center justify-center ${className}`}>
    <Icon name={icon} />
  </button>
);

function Header() {
  return (
    <header className="flex h-[45px] shrink-0">
      <button aria-label="Application menu" className="flex h-[41px] w-10 shrink-0 flex-col items-center border border-black bg-linear-to-b from-[#b9bcc1] to-[#6f7378]">
        <span className="flex items-center">
          <svg viewBox="0 0 24 28" className="ml-1 h-7 w-6" aria-hidden="true">
            <path d="M20 8C17 1 4 2 4 14s12 13 16 6" fill="none" stroke="#1f86d0" strokeWidth="6" />
            <path d="M19 7C16 2 6 3 5 12" fill="none" stroke="#4db8ee" strokeWidth="3" />
          </svg>
          <Caret className="border-[#222]" />
        </span>
        <span className="text-[9px] font-bold leading-[10px] text-[#222]">C3D</span>
      </button>
      <div className="flex min-w-0 flex-1 flex-col">
        <div className="flex h-6 items-center justify-between">
          <div className="flex w-[645px] items-center pl-[6px]">
            {["newFile", "open", "save", "saveAs", "mobile", "print", "undo"].map((n) => (
              <IconButton key={n} icon={n} />
            ))}
            <span className="mr-1 ml-1"><Caret /></span>
            <IconButton icon="redo" />
            <span className="mr-[6px] ml-1"><Caret className="border-[#777e8b]" /></span>
            <IconButton icon="custom" className="h-6 w-4" />
          </div>
          <h1 className="flex-1 whitespace-pre text-[#e4e6ea]">{"Autodesk Civil 3D 2020     03_01_PointStyles.dwg"}</h1>
          <div className="flex shrink-0 items-center">
            <span className="block size-0 border-y-4 border-l-[5px] border-y-transparent border-l-[#d5d8df]" />
            <input
              aria-label="Search"
              placeholder="Type a keyword or phrase"
              className="ml-1 h-5 w-[178px] bg-[#444c5c] px-[3px] italic text-white outline-none placeholder:text-[#b4bac4]"
            />
            <IconButton icon="binoculars" label="Find" className="ml-[1px] h-6 w-6" />
            <IconButton icon="user" label="Account" />
            <button className="flex items-center gap-[2px] text-[#d9dce2]">info@charlese... <Caret /></button>
            <IconButton icon="cart" label="Cart" className="ml-2 h-6 w-6" />
            <IconButton icon="a360" label="Autodesk App" />
            <Caret />
            <span className="mx-2 h-5 w-px bg-[#3f4757]" />
            <IconButton icon="help" label="Help" />
            <span className="ml-1"><Caret /></span>
            <IconButton icon="min" label="Minimize" className="ml-16 h-6 w-6" />
            <IconButton icon="restore" label="Restore" />
            <IconButton icon="close" label="Close" />
          </div>
        </div>
        <nav className="flex h-[21px] items-end pl-[6px] text-[#a9afbb]">
          <button className="h-[19px] w-[51px] rounded-t-sm bg-[#3c4154] text-white">Home</button>
          <div className="flex h-[19px] items-center gap-[21px] pl-[11px]">
            {TABS.map((t) => (
              <button key={t} className="whitespace-nowrap">{t}</button>
            ))}
          </div>
          <button className="mb-[1px] ml-3 h-[17px] w-[82px] bg-[#0e6f9d] text-[#e9eef2]">Geolocation</button>
          <button aria-label="Ribbon display" className="ml-[22px] flex h-[19px] items-center gap-[5px]">
            <Icon name="ribbonToggle" />
            <Caret />
          </button>
        </nav>
      </div>
    </header>
  );
}

const DRAW = [
  ["line", 1], ["arc", 1], ["pline", 0],
  ["divide", 1], ["circle", 1], ["rect", 1],
  ["pcurve", 1], ["ellipse", 1], ["hatch", 1],
];

function Ribbon() {
  return (
    <div className="flex h-[97px] shrink-0 pl-[3px] text-[#dde0e6]">
      <Panel className="w-[111px]" title="Palettes" caret>
        <button className="ml-[1px] flex h-[72px] w-[59px] flex-col items-center border border-[#5aa4d2] bg-[#40597a] pt-[2px]">
          <Icon name="toolspace" className="size-9" />
          <span>Toolspace</span>
        </button>
        <div className="grid h-[72px] grid-cols-2">
          {["prospector", "gear", "survey", "toolbox"].map((n) => (
            <IconButton key={n} icon={n} className="mb-[2px] h-[22px] w-6 border border-[#5aa4d2] bg-[#40597a]" />
          ))}
          {["sheet", "calc"].map((n) => <IconButton key={n} icon={n} />)}
        </div>
      </Panel>
      <Panel className="w-[127px]" title="Create Ground Data" caret>
        <Column className="pl-6" items={[["points", "Points", 1], ["surfaces", "Surfaces", 1], ["traverse", "Traverse", 1]]} />
      </Panel>
      <Panel className="w-[319px]" title="Create Design" caret>
        <Column className="w-[111px] pl-[6px]" items={[["parcel", "Parcel", 1], ["featureLine", "Feature Line", 1], ["grading", "Grading", 1]]} />
        <Column className="w-[98px]" items={[["alignment", "Alignment", 1], ["profile", "Profile", 1], ["corridor", "Corridor", 1]]} />
        <Column className="" items={[["intersections", "Intersections", 1], ["assembly", "Assembly", 1], ["pipes", "Pipe Network", 1]]} />
      </Panel>
      <Panel className="w-[131px]" title="Profile & Section Views">
        <Column className="pl-[13px]" items={[["profileView", "Profile View", 1], ["sampleLines", "Sample Lines"], ["sectionViews", "Section Views", 1]]} />
      </Panel>
      <Panel className="w-[117px]" title="Draw" caret>
        <div className="grid h-[72px] grid-cols-3 pl-2">
          {DRAW.map(([n, c]) => (
            <button key={n} aria-label={n} className="flex h-6 w-[37px] items-center gap-[5px]">
              <Icon name={n} />
              {c ? <Caret /> : null}
            </button>
          ))}
        </div>
      </Panel>
      <Panel className="w-[247px]" title="Modify" caret>
        <Column className="w-[72px] pl-[6px]" items={[["move", "Move"], ["copy", "Copy"], ["stretch", "Stretch"]]} />
        <Column className="ml-[6px] w-[69px]" items={[["rotate", "Rotate"], ["mirror", "Mirror"], ["scale", "Scale"]]} />
        <Column className="w-[70px]" items={[["trim", "Trim", 1], ["fillet", "Fillet", 1], ["array", "Array", 1]]} />
        <div className="flex flex-col">
          {["erase", "box", "offset"].map((n) => <IconButton key={n} icon={n} />)}
        </div>
      </Panel>
      <Panel className="w-[271px]" title="Layers" caret>
        <button className="flex w-[63px] flex-col items-center pt-[2px]">
          <Icon name="layerProps" className="size-9" />
          <span>Layer</span>
          <span>Properties</span>
        </button>
        <div className="flex flex-col">
          <div className="mt-[2px] flex h-5 w-[206px] items-center gap-1 bg-[#4d566c] pl-[3px] pr-1">
            <Icon name="bulb" />
            <Icon name="sun" />
            <Icon name="unlock" />
            <span className="size-[14px] border border-[#2b303c] bg-white" />
            <select aria-label="Layer" className="h-5 flex-1 appearance-none bg-transparent outline-none">
              <option>0</option>
            </select>
            <BigCaret />
          </div>
          <div className="mt-[2px] flex h-6 items-center">
            {["layOff", "layIso", "layFreeze", "layLock"].map((n) => <IconButton key={n} icon={n} />)}
            <Tool icon="layMake" label="Make Current" />
          </div>
          <div className="flex h-6 items-center">
            {["layOn", "layUniso", "layThaw", "layUnlock"].map((n) => <IconButton key={n} icon={n} />)}
            <Tool icon="layMatch" label="Match Layer" />
          </div>
        </div>
      </Panel>
      <Panel className="w-[78px]" title="Clipboard">
        <button className="flex w-[54px] flex-col items-center pt-[2px]">
          <Icon name="paste" className="size-9" />
          <span>Paste</span>
          <span className="mt-1"><Caret /></span>
        </button>
        <div className="flex flex-col">
          {["cut", "copyclip", "copylink"].map((n) => <IconButton key={n} icon={n} />)}
        </div>
      </Panel>
    </div>
  );
}

function FileTabs() {
  return (
    <div className="flex h-[31px] shrink-0 items-end border-b-[3px] border-[#3d4350] pl-4">
      <button className="h-[22px] w-[125px] rounded-t-xl bg-[#2b303e] pl-4 text-left text-[#a3a8b3]">Start</button>
      <div className="flex h-[22px] w-[143px] items-center rounded-t-xl bg-[#3c4154] pl-[14px] text-[#dfe2e8]">
        <button className="w-[100px] text-left">03_01_PointStyles*</button>
        <button aria-label="Close tab" className="ml-1"><Icon name="close" className="size-3" /></button>
      </div>
      <button aria-label="New tab" className="ml-1 mb-[1px] flex h-5 w-6 items-center justify-center rounded-lg bg-[#2b303e]">
        <Icon name="plus" className="size-2" />
      </button>
    </div>
  );
}

const TREE = [
  "General", "Point", "Surface", "Parcel", "Grading", "Alignment", "Profile", "Profile View", "Superelevation View",
  "Cant View", "Sample Line", "Section", "Section View", "Mass Haul Line", "Mass Haul View", "Catchment",
  "Pipe Network", "Pipe", "Structure", "Pressure Network", "Pressure Pipe", "Fitting", "Appurtenance", "Corridor",
  "Intersection", "Assembly", "Subassembly", "Quantity Takeoff", "Survey", "View Frame Group", "View Frame",
  "Match Line", "Building Site", "Rail",
];

const Expander = ({ open, label }) => (
  <button aria-label={label} className="flex size-[9px] shrink-0 items-center justify-center border border-[#999] bg-white">
    <svg viewBox="0 0 5 5" className="size-[5px]" aria-hidden="true">
      <path d={open ? "M0 2.500h5" : "M0 2.500h5M2.500 0v5"} stroke="#334" strokeWidth="1" />
    </svg>
  </button>
);

function Toolspace() {
  return (
    <aside className="flex w-[245px] shrink-0 bg-[#3d4355]">
      <div className="flex w-[221px] flex-col pt-[1px]">
        <div className="flex h-5 shrink-0 items-center gap-2 bg-[#2d3240] pl-[6px] text-[#d9dce2]">
          <span className="h-3 w-[3px] bg-[#555c6b]" />
          <h2>TOOLSPACE</h2>
        </div>
        <div className="flex h-[31px] shrink-0 items-center justify-end gap-[11px] pr-[5px]">
          <button aria-label="Panorama"><Icon name="tsTree" /></button>
          <button aria-label="Preview"><Icon name="tsPanel" /></button>
          <button aria-label="Toolspace help"><Icon name="tsHelp" /></button>
        </div>
        <div className="flex h-[22px] shrink-0 items-center bg-[#e4e4e4] pr-1 text-[#222]">
          <select aria-label="View" className="h-[22px] flex-1 appearance-none bg-transparent pl-1 outline-none">
            <option>Active Drawing Settings View</option>
          </select>
          <svg viewBox="0 0 10 6" className="h-[6px] w-[10px]" aria-hidden="true"><path d="M1 1l4 4 4-4" fill="none" stroke="#555" /></svg>
        </div>
        <div className="mt-[2px] flex min-h-0 flex-1 overflow-hidden bg-white pt-[2px] pr-[3px] text-[#222]">
          <ul className="min-w-0 flex-1 overflow-hidden">
            <li>
              <div className="flex h-5 items-center pl-[10px]">
                <Expander open label="Collapse 03_01_PointStyles" />
                <span className="h-px w-[7px] bg-[#bbb]" />
                <Icon name="drawing" />
                <span className="ml-[7px] font-bold">03_01_PointStyles</span>
              </div>
              <ul className="ml-[33px] border-l border-[#c4c4c4]">
                {TREE.map((t) => (
                  <li key={t} className="-ml-[5px] flex h-5 items-center">
                    <Expander label={`Expand ${t}`} />
                    <span className="h-px w-1 bg-[#bbb]" />
                    <span className="ml-[3px] flex"><Icon name={t} /></span>
                    <span className="ml-[7px] whitespace-nowrap">{t}</span>
                  </li>
                ))}
              </ul>
            </li>
          </ul>
          <div className="flex w-[14px] flex-col">
            <button aria-label="Scroll up" className="flex h-4 items-center justify-center bg-[#f0f0f0]">
              <svg viewBox="0 0 10 6" className="h-[6px] w-[10px]" aria-hidden="true"><path d="M1 5l4-4 4 4" fill="none" stroke="#444" strokeWidth="1.800" /></svg>
            </button>
            <div className="flex-1 bg-[#cdcdcd]" />
            <button aria-label="Scroll down" className="flex h-9 items-end justify-center bg-[#f0f0f0] pb-[6px]">
              <svg viewBox="0 0 10 6" className="h-[6px] w-[10px]" aria-hidden="true"><path d="M1 1l4 4 4-4" fill="none" stroke="#444" strokeWidth="1.800" /></svg>
            </button>
          </div>
        </div>
        <div className="mt-2 mb-[3px] h-[93px] shrink-0 border border-[#7d8596]" />
      </div>
      <div className="flex flex-col pt-[24px] pl-[2px]">
        {["Prospector", "Settings", "Survey", "Toolbox"].map((t) => (
          <button
            key={t}
            className={`flex h-[121px] w-[18px] items-center justify-center border-b border-[#272c38] ${t === "Settings" ? "bg-[#3d4355] text-[#d9dce2]" : "bg-[#2d3240] text-[#9ba1ae]"}`}
          >
            <span className="rotate-180 [writing-mode:vertical-rl]">{t}</span>
          </button>
        ))}
      </div>
    </aside>
  );
}

const GROUPS = [
  ["Default Layer", "grpCheck", [["Layer", "<use current>"]]],
  ["Points Creation", "grpCheck", [
    ["Local Coordinates", "Northing - Easting"],
    ["Grid Coordinates", "Grid Northing - Grid Easting"],
    ["Geographic Coordinates", "Latitude - Longitude"],
    ["Prompt For Elevations", "Automatic"],
    ["Prompt For Point Names", "None"],
    ["Prompt For Descriptions", "Automatic"],
    ["Default Elevation", "100.00'"],
    ["Default Description", "FH"],
    ["Match On Description Paramet...", "True"],
    ["Disable Description Keys", "True"],
    ["Echo Coordinates to Comman...", "True"],
  ]],
  ["Default Styles", "grpPoint", [["Point Style", "<none>"], ["Point Label Style", "<none>"]]],
  ["Default Name Format", "grpPoint", [
    ["Point Group Name Template", "Point Group - (<[Next Counter(CP)]>)"],
    ["Point Name Template", "Point - (<[Next Counter(CP)]>)"],
  ]],
  ["Point Identity", "grpPoint", [
    ["Next Point Number", "1"],
    ["Use Sequential Numbering", "True"],
    ["Point Number Offset", "1"],
    ["Sequence Point Numbers From", "100"],
    ["If Point Numbers Are Supplied", "Use"],
    ["Force Names", "False"],
    ["If Point Numbers Already Exist", "Notify"],
    ["If Point Names Already Exist", "Notify"],
    ["If Point Numbers Need To Be ...", "Use next point number"],
  ]],
];

const CELL = "h-[19px] whitespace-nowrap border-b border-b-[#d9d2e4] border-l border-l-[#f3d3cb] bg-[#fdfee6] p-0";

function CreatePoints() {
  return (
    <section
      aria-label="Create Points"
      className="absolute -top-[7px] left-[203px] z-10 flex h-[795px] w-[729px] flex-col border border-[#7fa3c7] border-t-white bg-linear-to-b from-[#9dbbdb] via-[#b6cfea] via-10% to-[#bcd2ea] px-[7px] pb-[5px] text-[#444]"
    >
      <div className="flex h-[29px] shrink-0 items-start justify-between">
        <h2 className="pt-[10px] text-[#222]">Create Points</h2>
        <div className="-mr-[7px] flex h-4">
          <button aria-label="Pin" className="flex w-[25px] items-center justify-center rounded-bl border border-t-0 border-[#7c8ea3] bg-linear-to-b from-[#cdd8e4] to-[#a9b8ca]">
            <svg viewBox="0 0 14 12" className="h-3 w-[14px]" aria-hidden="true">
              <circle cx="7" cy="6" r="5" fill="#8d97a5" /><circle cx="8" cy="5" r="3.500" fill="#eef1f4" /><path d="M8 1v5L3 10" fill="none" stroke="#8d97a5" strokeWidth="1.200" />
            </svg>
          </button>
          <button aria-label="Dialog help" className="w-[25px] border-b border-[#7c8ea3] bg-linear-to-b from-[#cdd8e4] to-[#a9b8ca] text-sm font-bold leading-[15px] text-[#4c5561]">?</button>
          <button aria-label="Close dialog" className="flex w-[37px] items-center justify-center border border-t-0 border-[#8f3b32] bg-linear-to-b from-[#dc9184] via-[#c94a38] to-[#d0533f]">
            <Icon name="close" className="size-3" />
          </button>
        </div>
      </div>
      <div className="flex min-h-0 flex-1 flex-col bg-[#f0f0f0]">
        <div className="flex h-[26px] shrink-0 items-center justify-between pr-[9px] pl-3">
          <div className="flex items-center">
            {["ptAdd", "ptDown", "ptArc", "ptSurf", "ptInterp", "ptSlope"].map((n) => (
              <button key={n} aria-label={n} className="flex w-11 items-center gap-1">
                <Icon name={n} className="size-[18px]" />
                <BigCaret className="border-[#222]" />
              </button>
            ))}
            <button aria-label="Import points"><Icon name="ptImport" className="size-[18px]" /></button>
          </div>
          <button aria-label="Collapse" className="flex h-[22px] w-[23px] items-center justify-center border-2 border-[#4d89bd] bg-[#c5def2]">
            <svg viewBox="0 0 12 12" className="size-3" aria-hidden="true"><path d="M1 6l5-5 5 5M1 11l5-5 5 5" fill="none" stroke="#5c6671" strokeWidth="2.200" /></svg>
          </button>
        </div>
        <div className="mr-[6px] ml-[2px] flex-1 border-t-2 border-l border-[#7b7b7b] bg-[#f4f4f4]">
          <table className="w-full table-fixed border-separate border-spacing-0">
            <colgroup><col className="w-[18px]" /><col className="w-[193px]" /><col /></colgroup>
            <thead>
              <tr className="h-[24px] bg-[#ececec] text-left">
                <th colSpan={2} className="p-0 pl-2 font-normal">Parameter</th>
                <th className="border-l border-[#ddd] p-0 pl-2 font-normal">Value</th>
              </tr>
            </thead>
            {GROUPS.map(([title, icon, rows]) => (
              <tbody key={title}>
                <tr>
                  <td className="h-[19px] p-0 pl-2"><Expander open label={`Collapse ${title}`} /></td>
                  <td className={`${CELL} text-[#333]`}>
                    <span className="flex h-[18px] items-center font-bold"><span className="mr-[2px]"><Icon name={icon} /></span>{title}</span>
                  </td>
                  <td className={`${CELL} border-r border-r-[#f3d3cb]`} />
                </tr>
                {rows.map(([k, v]) => (
                  <tr key={k}>
                    <td className="p-0" />
                    <td className={CELL}><span className="block pl-[19px] leading-[18px]">{k}</span></td>
                    <td className={`${CELL} border-r border-r-[#f3d3cb]`}><span className="block pl-[6px] leading-[18px]">{v}</span></td>
                  </tr>
                ))}
              </tbody>
            ))}
          </table>
        </div>
        <div className="flex h-[22px] shrink-0 items-center justify-between border-t border-[#dcdcdc] text-[#222]">
          <span>Select a command from the point creation tools</span>
          <svg viewBox="0 0 12 12" className="mt-2 size-3" aria-hidden="true"><path d="M1 12L12 1M5 12l7-7M9 12l3-3" stroke="#8a8a8a" /></svg>
        </div>
      </div>
    </section>
  );
}

function ViewCube() {
  return (
    <div className="absolute top-[39px] right-[15px] flex w-[136px] flex-col items-center">
      <svg viewBox="0 0 136 134" className="h-[134px] w-[136px]" aria-label="View cube" fontFamily="'Liberation Sans',sans-serif" fontWeight="700" fontSize="20" fill="#b2b5bb" textAnchor="middle">
        <circle cx="68" cy="67" r="54" fill="none" stroke="#434854" strokeWidth="14" />
        <path d="M42 41h52v52H42z" fill="#b1b3b6" />
        <path d="M51 51h34v33H51z" fill="#a6a8ab" />
        <text x="68" y="72" fontSize="12" fontFamily="'Open Sans',sans-serif" fill="#54585f">TOP</text>
        <text x="68" y="18">N</text>
        <text x="68" y="131">S</text>
        <text x="11" y="74">W</text>
        <text x="124" y="74">E</text>
      </svg>
      <button className="mt-[20px] h-[17px] w-12 rounded-sm border border-[#70757f] bg-[#9b9ea6] pl-1 text-left leading-[14px] text-[#5b606b]">WCS</button>
    </div>
  );
}

function NavBar() {
  return (
    <div className="absolute top-[236px] right-1 h-[213px] w-8 rounded-sm border border-[#6a6e75] bg-[#595d64]">
      <svg viewBox="0 0 32 213" className="size-full" fill="none" stroke="#484c53" strokeWidth="1.200" aria-label="Navigation bar">
        <circle cx="26" cy="6" r="3" />
        <circle cx="16" cy="30" r="10" /><circle cx="16" cy="30" r="5" /><path d="M24 20h4v8" />
        <path d="M10 83c-4-6-6-8-4-10l4 4v-9h3v6-10h3v10-9h3v9l3-7 3 1-3 14c-4 4-8 4-12 1z" />
        <path d="M6 92l18 18M24 92L6 110M4 90h5M4 90v5M21 90h5v5" /><circle cx="21" cy="105" r="5" /><path d="M25 109l4 4" />
        <path d="M16 128v24M6 142h20M10 136c4-4 10-4 14 0M6 142l4-3M26 142l-4-3" />
        <path d="M4 170h24v7H4zM12 170v7M20 170v7M5 180h16v14H5z" /><path d="M10 183l6 4-6 4z" fill="#42464e" />
        <path d="M14 49h4l-2 3zM14 119h4l-2 3zM14 158h4l-2 3z" fill="#42464e" />
        <circle cx="26" cy="206" r="3" />
      </svg>
    </div>
  );
}

function Canvas() {
  return (
    <main className="relative min-w-0 flex-1 bg-[#222732]">
      <p className="absolute top-[6px] left-1 text-[#c9cdd4]">[−][Top][2D Wireframe]</p>
      <svg className="absolute top-[160px] left-[925px] h-[160px] w-[310px]" viewBox="0 0 310 160" aria-hidden="true">
        <path d="M0 154L305 8" stroke="#c7cad0" strokeWidth="1" />
      </svg>
      <svg className="absolute bottom-0 left-4 h-[88px] w-[80px]" viewBox="0 0 80 88" fill="none" stroke="#b9bdc5" aria-label="UCS icon">
        <path d="M6 64V16M10 68h45M2 64h8v8H2z" />
        <path d="M8 1l5 6 5-6M13 7v6M61 55l12 12M73 55L61 67" />
      </svg>
      <div className="absolute top-2 right-[10px] flex items-center gap-1">
        <button aria-label="Minimize drawing"><Icon name="min" className="size-[15px]" /></button>
        <button aria-label="Restore drawing">
          <svg viewBox="0 0 16 16" className="size-[15px]" aria-hidden="true"><path d="M5 5V2h9v9h-3M3 5h8v9H3zM6 8h2v2H6z" fill="none" stroke="#fff" strokeWidth="2" /></svg>
        </button>
        <button aria-label="Close drawing"><Icon name="close" className="size-[15px]" /></button>
      </div>
      <ViewCube />
      <NavBar />
      <CreatePoints />
      <svg className="absolute top-[200px] left-[628px] z-20 h-[20px] w-[14px]" viewBox="0 0 14 20" aria-hidden="true">
        <path d="M1 1v14l3-3 3 6 2-1-2.500-6H11z" fill="#fff" stroke="#555" />
      </svg>
      <div className="absolute right-[20px] bottom-[15px] flex w-[410px] flex-col items-center text-[#9a9da6]">
        <div className="flex items-center gap-[6px] font-[Inter,sans-serif] font-bold">
          <span className="text-[34px] leading-9">AUTOCAD</span>
          <span className="text-[56px] leading-9 font-extrabold">CIVIL3D</span>
        </div>
        <div className="flex w-[346px] justify-between font-[Inter,sans-serif] text-xl leading-6 font-semibold">
          {"TRAINING".split("").map((c, i) => <span key={i}>{c}</span>)}
        </div>
        <a href="#training" className="font-['Liberation_Sans',sans-serif] text-[21px] leading-7 text-[#7f838d]">autocadcivil3dtraining.com</a>
      </div>
      <div className="absolute bottom-0 left-[394px] z-10 flex h-[25px] w-[855px] bg-[#2b303b]">
        <div className="flex w-14 items-center gap-[2px] pl-[2px]">
          <svg viewBox="0 0 6 18" className="h-[18px] w-[6px]" aria-hidden="true"><path d="M1 0v18M4 0v18" stroke="#9a9fa9" strokeWidth="2" strokeDasharray="2 1" /></svg>
          <IconButton icon="close" label="Close command line" className="h-5 w-[18px] p-[3px]" />
          <IconButton icon="wrench" label="Customize" className="h-5 w-5" />
        </div>
        <label className="flex flex-1 items-center bg-[#bcbec0] px-1">
          <Icon name="prompt" />
          <span className="ml-[3px]"><BigCaret className="border-[#5b5f66]" /></span>
          <input placeholder="Type a command" aria-label="Command" className="ml-[6px] h-6 flex-1 bg-transparent font-['Liberation_Mono',monospace] text-xs italic outline-none placeholder:text-[#63676e]" />
          <span className="block size-0 border-x-[3px] border-b-4 border-x-transparent border-b-[#555]" />
        </label>
      </div>
    </main>
  );
}

const SIDE = [
  "grip", "rA", "rB", "rC", "rD", "rE", "globeTab", "globe", "stBlue", "stA", "stCur", "stZoom", "flag", "bluT",
  "bar", "persCur", "bar", "crvBlue", "crvBall", "crvStar", "bar", "ang1", "ang2", "ang3", "ang4", "noCirc",
  "lineNote", "arcCalc", "grip", "persCur", "persTab", "persBlue",
];

function SideBar() {
  return (
    <div className="flex w-8 shrink-0 flex-col items-center border-l-2 border-[#2c3140] bg-[#3d4355]">
      <div className="flex w-6 flex-col items-center bg-[#363c4e]">
        {SIDE.map((n, i) =>
          n === "grip" ? (
            <span key={i} className="my-[3px] h-1 w-[14px] bg-[#6a7080]" />
          ) : n === "bar" ? (
            <span key={i} className="my-[2px] h-[2px] w-[19px] bg-[#a9adb6]" />
          ) : (
            <IconButton key={i} icon={n} className="h-[22px] w-6" />
          )
        )}
      </div>
    </div>
  );
}

const StatusGroup = ({ className = "", children }) => (
  <div className={`mr-[3px] flex h-[25px] shrink-0 items-center justify-around bg-[#3a4053] ${className}`}>{children}</div>
);

const S = ({ n, className = "w-[22px] h-[22px]" }) => <IconButton icon={n} className={className} />;

function StatusBar() {
  return (
    <footer className="flex h-8 shrink-0 flex-col border-t-2 border-[#2c313d] text-[#d9dce2]">
      <div className="flex h-7 items-center justify-between">
        <div className="flex h-full items-start pl-3">
          <button className="h-[19px] w-[58px] rounded-b-lg bg-[#3c4154] font-bold text-white">Model</button>
          <button className="ml-[2px] h-[19px] w-[60px] rounded-b-lg bg-[#2b303e] text-[#a3a8b3]">Layout1</button>
          <button aria-label="New layout" className="ml-1 flex h-[19px] w-[22px] items-center justify-center rounded-b-lg bg-[#2b303e]"><Icon name="plus" className="size-2" /></button>
        </div>
        <div className="flex items-center text-xs">
          <StatusGroup className="w-[47px]"><button>MODEL</button></StatusGroup>
          <StatusGroup className="w-[63px]"><S n="gridI" /><S n="snapI" /><Caret /></StatusGroup>
          <StatusGroup className="w-[102px]"><S n="ortho" /><S n="polar" /><Caret /><S n="iso" /><Caret /></StatusGroup>
          <StatusGroup className="w-[62px]"><S n="track" /><S n="osnap" /><Caret /></StatusGroup>
          <StatusGroup className="w-[132px]">
            <S n="annoVis" className="h-[22px] w-[22px] bg-[#4f8ac9]" /><S n="annoAuto" /><S n="anno" />
            <button className="flex items-center gap-[6px] whitespace-nowrap">1" = 20' <Caret /></button>
          </StatusGroup>
          <StatusGroup className="w-[38px]"><S n="gear" /><Caret /></StatusGroup>
          <StatusGroup className="w-[24px]"><S n="plus" /></StatusGroup>
          <StatusGroup className="w-[51px]"><S n="layersS" /><span>3.5</span></StatusGroup>
          <StatusGroup className="w-[24px]"><S n="shapes" /></StatusGroup>
          <StatusGroup className="w-[49px]"><S n="globeCk" /><S n="imgWarn" /></StatusGroup>
          <StatusGroup className="w-[49px]"><S n="screen" /><S n="menu" /></StatusGroup>
        </div>
      </div>
      <div className="flex h-[2px] bg-black pl-12"><span className="h-[2px] w-[344px] bg-[#d5dde0]" /></div>
    </footer>
  );
}

export default function App() {
  return (
    <div className="flex h-screen w-full flex-col overflow-hidden bg-[#202630] font-['Open_Sans',sans-serif] text-[11px]/4">
      <Header />
      <Ribbon />
      <FileTabs />
      <div className="flex min-h-0 flex-1">
        <Toolspace />
        <Canvas />
        <SideBar />
      </div>
      <StatusBar />
    </div>
  );
}
